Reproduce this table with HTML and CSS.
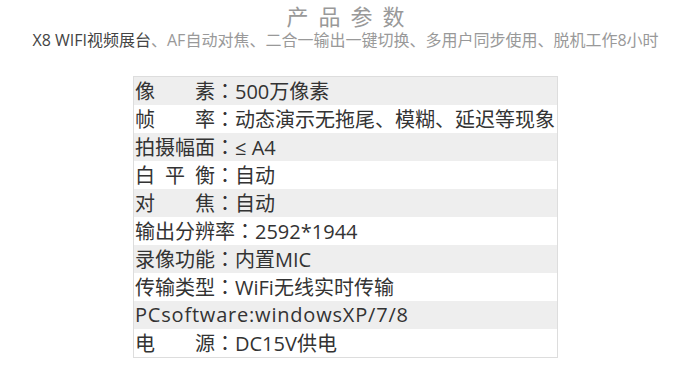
FILE: index.html
```html
<!DOCTYPE html>
<html lang="zh-CN">
<head>
<meta charset="utf-8">
<title>产品参数</title>
<link rel="stylesheet" href="styles.css">
</head>
<body>
<div class="page">
  <h1 class="title">产品参数</h1>
  <p class="subtitle"><span class="lead">X8 WIFI视频展台</span>、AF自动对焦、二合一输出一键切换、多用户同步使用、脱机工作8小时</p>
  <table class="spec">
    <tr class="odd"><td>像&emsp;&emsp;素<span class="colon">：</span>500万像素</td></tr>
    <tr><td>帧&emsp;&emsp;率<span class="colon">：</span>动态演示无拖尾、模糊、延迟等现象</td></tr>
    <tr class="odd"><td>拍摄幅面<span class="colon">：</span>≤ A4</td></tr>
    <tr><td>白&ensp;平&ensp;衡<span class="colon">：</span>自动</td></tr>
    <tr class="odd"><td>对&emsp;&emsp;焦<span class="colon">：</span>自动</td></tr>
    <tr><td>输出分辨率<span class="colon">：</span>2592*1944</td></tr>
    <tr class="odd"><td>录像功能<span class="colon">：</span>内置MIC</td></tr>
    <tr><td>传输类型<span class="colon">：</span>WiFi无线实时传输</td></tr>
    <tr class="odd"><td class="latin">PCsoftware:windowsXP/7/8</td></tr>
    <tr><td>电&emsp;&emsp;源<span class="colon">：</span>DC15V供电</td></tr>
  </table>
</div>
</body>
</html>
```
FILE: styles.css
```css
html, body {
  margin: 0;
  padding: 0;
  background: #fff;
}
body {
  font-family: "Open Sans", "Noto Sans CJK SC", sans-serif;
}
.page {
  width: 655px;
  margin-left: 18px;
  display: flex;
  flex-direction: column;
  align-items: center;
}
.title {
  align-self: stretch;
  margin: 0;
  padding: 0 0 0 10px;
  text-align: center;
  font-family: "Noto Sans CJK SC", sans-serif;
  font-size: 22px;
  line-height: 30px;
  height: 28px;
  font-weight: normal;
  color: #999;
  letter-spacing: 10px;
}
.subtitle {
  margin: 1px 0 0;
  font-size: 16px;
  line-height: 22px;
  color: #999;
  white-space: nowrap;
}
.subtitle .lead {
  color: #444;
}
.spec {
  margin-top: 25px;
  width: 425px;
  border-collapse: collapse;
  border: 1px solid #ddd;
}
.spec td {
  height: 28px;
  padding: 0 0 0 1px;
  font-size: 20px;
  line-height: 20px;
  color: #333;
  white-space: nowrap;
  vertical-align: middle;
}
.spec td.latin {
  letter-spacing: 0.8px;
}
.spec .colon {
  font-family: "Noto Sans CJK TC", sans-serif;
  font-feature-settings: "locl" 0;
}
.spec tr {
  background: #fff;
}
.spec tr.odd {
  background: #eee;
}
```
